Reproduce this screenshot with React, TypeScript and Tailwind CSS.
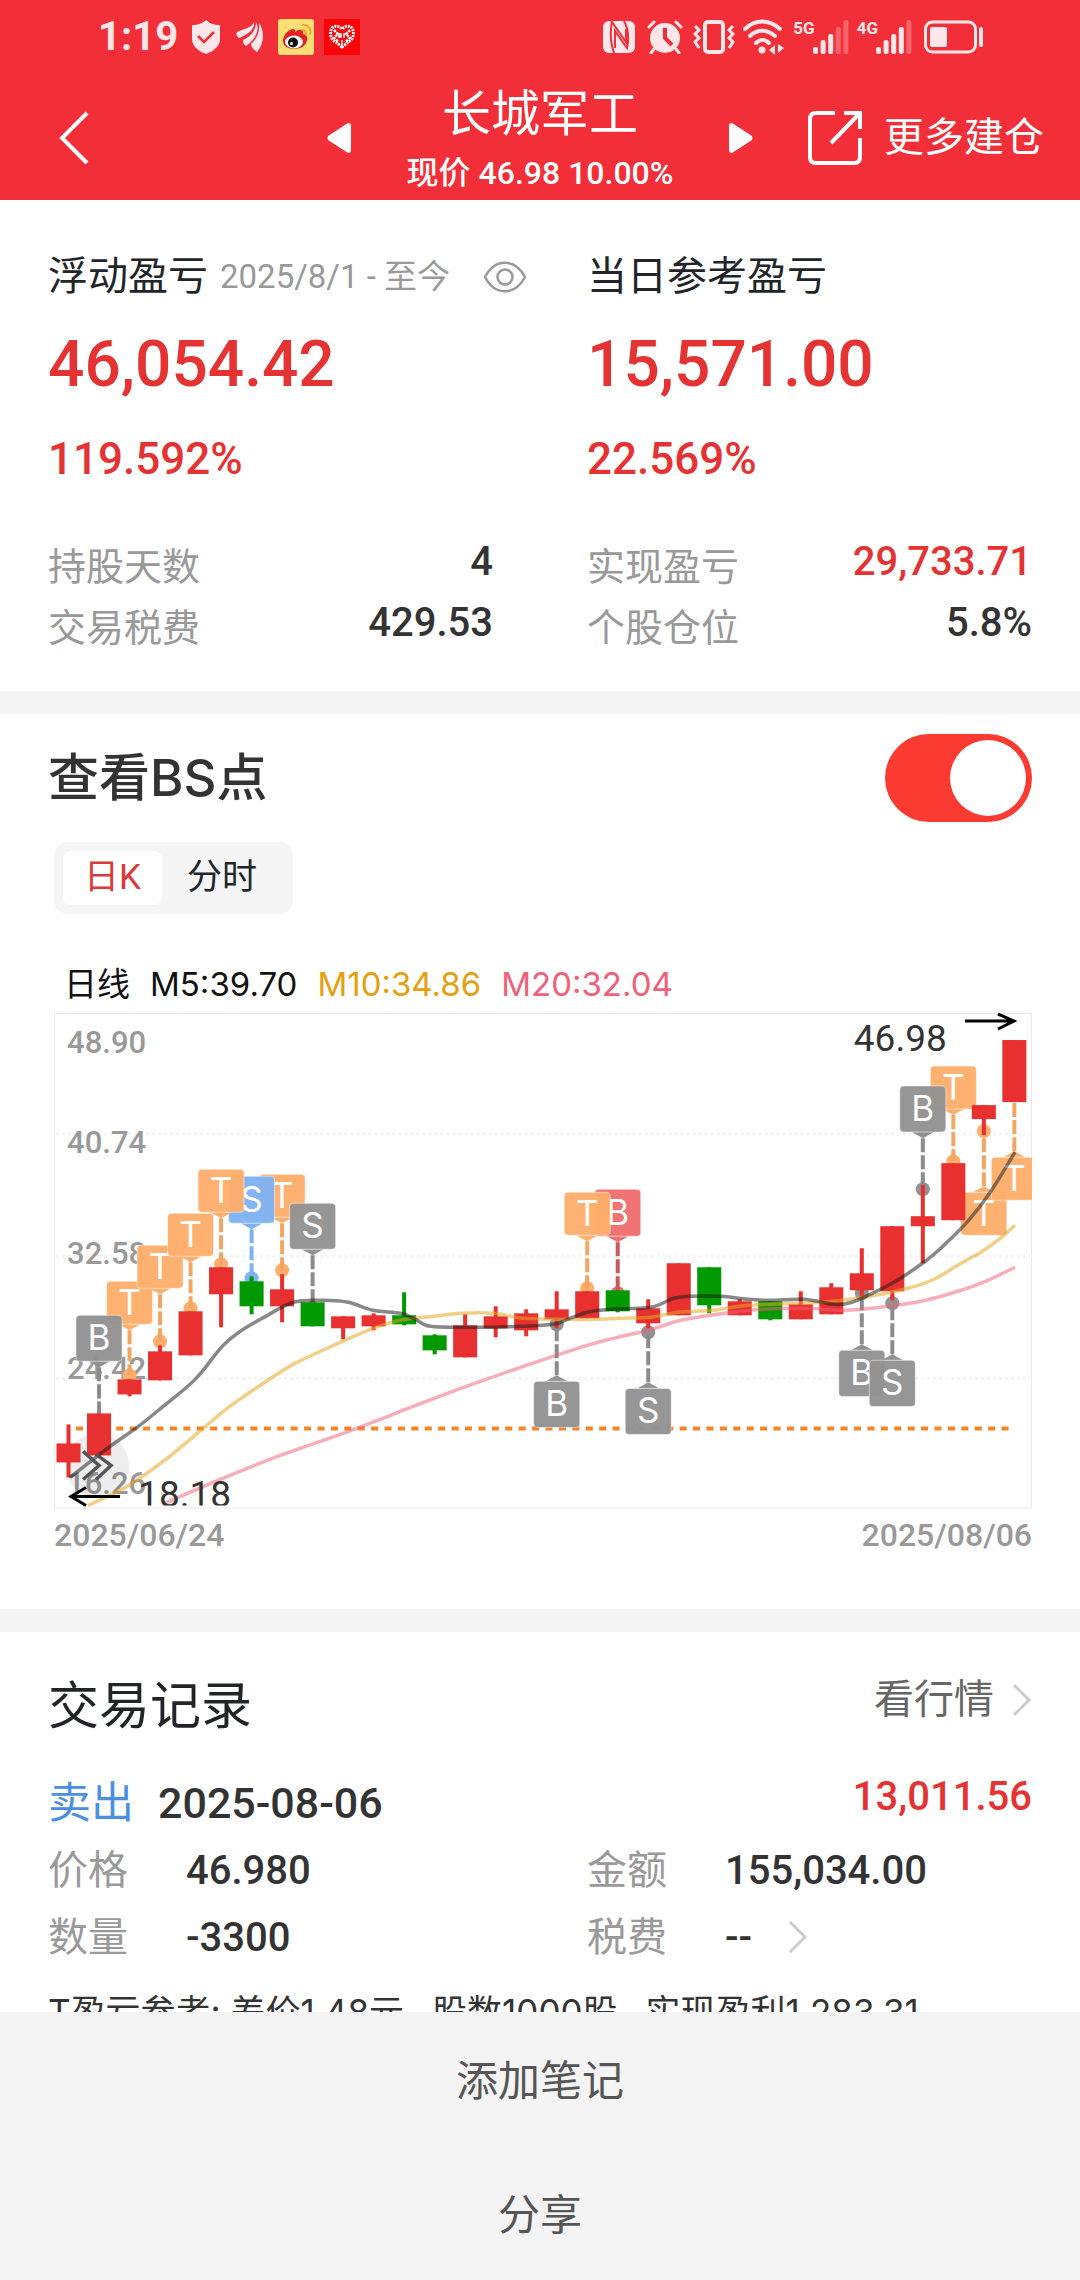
import { useState } from 'react';

type Candle = {
  open: number;
  close: number;
  high?: number;
  low?: number;
  down?: boolean;
};

type Marker = {
  index: number;
  letter: 'B' | 'S' | 'T';
  tone: 'gray' | 'orange' | 'blue' | 'red';
  top: number;
  height: number;
  dot: number;
};

type Point = [number, number];

// Vertical positions inside the 977x495 plot
const candles: Candle[] = [
  { open: 430, close: 449, high: 411, low: 464 },
  { open: 400, close: 442 },
  { open: 366, close: 381, low: 383 },
  { open: 338, close: 367, high: 332 },
  { open: 298, close: 342 },
  { open: 254, close: 281, low: 314 },
  { open: 268, close: 293, high: 263, low: 301, down: true },
  { open: 276, close: 293, high: 261, low: 309 },
  { open: 289, close: 313, down: true },
  { open: 303, close: 315, low: 326 },
  { open: 302, close: 313, high: 300, low: 317 },
  { open: 302, close: 311, high: 279, low: 312, down: true },
  { open: 322, close: 337, high: 321, low: 341, down: true },
  { open: 312, close: 344, high: 301 },
  { open: 303, close: 315, high: 293, low: 324 },
  { open: 300, close: 317, high: 296, low: 323 },
  { open: 296, close: 306, high: 278, low: 315 },
  { open: 278, close: 305 },
  { open: 277, close: 298, low: 299, down: true },
  { open: 295, close: 310, high: 286, low: 315 },
  { open: 250, close: 302 },
  { open: 254, close: 292, low: 300, down: true },
  { open: 288, close: 302, high: 286 },
  { open: 288, close: 306, low: 307, down: true },
  { open: 291, close: 306, high: 278 },
  { open: 274, close: 301, high: 270 },
  { open: 260, close: 277, high: 235, low: 285 },
  { open: 213, close: 278, low: 287 },
  { open: 203, close: 213, high: 172, low: 250 },
  { open: 150, close: 207 },
  { open: 92, close: 106, low: 122 },
  { open: 27, close: 89 },
];

const markers: Marker[] = [
  { index: 2, letter: 'T', tone: 'orange', top: 268, height: 43, dot: 362 },
  { index: 3, letter: 'T', tone: 'orange', top: 232, height: 43, dot: 328 },
  { index: 4, letter: 'T', tone: 'orange', top: 200, height: 43, dot: 295 },
  { index: 7, letter: 'T', tone: 'orange', top: 161, height: 43, dot: 257 },
  { index: 6, letter: 'S', tone: 'blue', top: 163, height: 47, dot: 265 },
  { index: 5, letter: 'T', tone: 'orange', top: 156, height: 43, dot: 251 },
  { index: 8, letter: 'S', tone: 'gray', top: 190, height: 46, dot: 295 },
  { index: 1, letter: 'B', tone: 'gray', top: 302, height: 46, dot: 408 },
  { index: 18, letter: 'B', tone: 'red', top: 176, height: 47, dot: 280 },
  { index: 17, letter: 'T', tone: 'orange', top: 179, height: 43, dot: 275 },
  { index: 16, letter: 'B', tone: 'gray', top: 368, height: 46, dot: 311 },
  { index: 19, letter: 'S', tone: 'gray', top: 375, height: 46, dot: 319 },
  { index: 26, letter: 'B', tone: 'gray', top: 337, height: 46, dot: 280 },
  { index: 27, letter: 'S', tone: 'gray', top: 347, height: 46, dot: 290 },
  { index: 29, letter: 'T', tone: 'orange', top: 53, height: 43, dot: 148 },
  { index: 28, letter: 'B', tone: 'gray', top: 73, height: 46, dot: 176 },
  { index: 30, letter: 'T', tone: 'orange', top: 179, height: 43, dot: 118 },
  { index: 31, letter: 'T', tone: 'orange', top: 144, height: 43, dot: 80 },
];

const tones = {
  gray: { box: '#929292', stem: '#8c8c8c' },
  orange: { box: '#ffae6c', stem: '#f3a563' },
  blue: { box: '#7eb2f3', stem: '#7eb2f3' },
  red: { box: '#f06d6e', stem: '#c85a5c' },
};

const ma5: Point[] = [
  [16, 464], [56, 433], [83, 414], [109, 393], [141, 366], [168, 333], [186, 318], [208, 305], [239, 289],
  [269, 287], [294, 289], [319, 297], [346, 300], [361, 306], [376, 313], [419, 314], [469, 313], [499, 311],
  [513, 306], [533, 299], [556, 296], [596, 294], [619, 285], [636, 283], [666, 283], [693, 286], [716, 287],
  [749, 286], [779, 291], [793, 290], [809, 284], [839, 269], [869, 249], [888, 233], [913, 208], [936, 178],
  [960, 139],
];

const ma10: Point[] = [
  [34, 492], [73, 473], [109, 448], [149, 415], [173, 395], [203, 374], [239, 351], [286, 329], [319, 315],
  [346, 307], [379, 303], [406, 300], [439, 300], [469, 305], [506, 306], [539, 306], [566, 305], [596, 304],
  [623, 299], [659, 297], [693, 292], [766, 289], [809, 284], [853, 275], [879, 266], [906, 250], [926, 239],
  [943, 227], [960, 212],
];

const ma20: Point[] = [
  [108, 491], [166, 466], [226, 442], [286, 421], [326, 406], [356, 394], [393, 380], [426, 368], [469, 353],
  [526, 334], [559, 325], [593, 317], [626, 307], [649, 303], [686, 298], [709, 296], [749, 295], [789, 297],
  [826, 294], [866, 288], [903, 278], [933, 267], [960, 254],
];

const priceLabels = [
  { text: '48.90', y: 40 },
  { text: '40.74', y: 140 },
  { text: '32.58', y: 251 },
  { text: '24.42', y: 366 },
  { text: '16.26', y: 481 },
];

const candleX = (index: number) => 14.5 + index * 30.48;

// Catmull-Rom spline through the points, as cubic beziers
function smoothPath(points: Point[]) {
  let d = `M${points[0][0]} ${points[0][1]}`;
  for (let i = 0; i < points.length - 1; i++) {
    const p0 = points[i - 1] ?? points[i];
    const p1 = points[i];
    const p2 = points[i + 1];
    const p3 = points[i + 2] ?? p2;
    d += ` C${p1[0] + (p2[0] - p0[0]) / 6} ${p1[1] + (p2[1] - p0[1]) / 6}`;
    d += ` ${p2[0] - (p3[0] - p1[0]) / 6} ${p2[1] - (p3[1] - p1[1]) / 6} ${p2[0]} ${p2[1]}`;
  }
  return d;
}

function ChartMarker({ index, letter, tone, top, height, dot }: Marker) {
  const x = candleX(index);
  const above = top < dot;
  const edge = above ? top + height : top;
  const tip = above ? edge + 6 : edge - 6;
  const color = tones[tone];
  return (
    <g>
      <circle cx={x} cy={dot} r={7} fill={color.box} />
      <path d={`M${x} ${tip}V${dot}`} stroke={color.stem} strokeWidth={4} strokeDasharray="14 3" />
      <path d={`M${x - 11} ${edge}H${x + 11}L${x} ${tip}Z`} fill={color.box} />
      <rect x={x - 23} y={top} width={46} height={height} rx={4} fill={color.box} fillOpacity={0.96} stroke="#fff" strokeOpacity={0.5} />
      <text x={x} y={top + height / 2 + 12} textAnchor="middle" fontSize={35} fill="#fff">
        {letter}
      </text>
    </g>
  );
}

function KLineChart() {
  return (
    <svg viewBox="0 0 977 495" className="block w-full font-[Inter,sans-serif]" role="img" aria-label="日K">
      <rect x={0.5} y={0.5} width={976} height={494} fill="#fff" stroke="#e9e9e9" />
      {[121, 243, 365].map((y) => (
        <path key={y} d={`M2 ${y}H975`} stroke="#f4f4f4" strokeWidth={3} strokeDasharray="3 3" />
      ))}
      <g fontSize={31} fontWeight={500} fill="#999" className="font-[Roboto,sans-serif]">
        {priceLabels.map((label) => (
          <text key={label.text} x={13} y={label.y}>
            {label.text}
          </text>
        ))}
      </g>
      <path d="M22 415H960" stroke="#f58426" strokeWidth={4} strokeDasharray="7 6.4" />
      <circle cx={43} cy={452} r={32} fill="#000" fillOpacity={0.07} />
      {markers.map((marker) => (
        <ChartMarker key={marker.index} {...marker} />
      ))}
      {candles.map((candle, i) => {
        const x = candleX(i);
        const color = candle.down ? '#009900' : '#e83030';
        return (
          <g key={i} fill={color}>
            <rect x={x - 2} y={candle.high ?? candle.open} width={4} height={(candle.low ?? candle.close) - (candle.high ?? candle.open)} />
            <rect x={x - 12} y={candle.open} width={24} height={candle.close - candle.open} />
          </g>
        );
      })}
      <g fill="none" strokeWidth={3.5}>
        <path d={smoothPath(ma20)} stroke="#f25c78" strokeOpacity={0.5} />
        <path d={smoothPath(ma10)} stroke="#e5a823" strokeOpacity={0.55} />
        <path d={smoothPath(ma5)} stroke="#1a1a1a" strokeOpacity={0.52} />
        <path d="M29 438L45 452L29 466M42 441L57 452L42 466" stroke="#555" />
      </g>
      {/* low and high price of the visible range */}
      <g fill="none" stroke="#000" strokeWidth={3}>
        <path d="M66 483H17M32 474L17 483L32 492" />
        <path d="M910 8H959M943 1L959 8L943 16" />
      </g>
      <svg x={0} y={0} width={977} height={492} fontSize={37} fill="#333" className="font-[Roboto,sans-serif]">
        <text x={84} y={494}>18.18</text>
        <text x={799} y={38}>46.98</text>
      </svg>
    </svg>
  );
}

function SignalBars({ strength }: { strength: number }) {
  return (
    <svg viewBox="0 0 36 34" className="h-[34px] w-9" fill="currentColor">
      {[7, 14, 20, 27, 34].map((h, i) => (
        <rect key={h} x={i * 7.6} y={34 - h} width={5} height={h} rx={2} opacity={i < strength ? 1 : 0.3} />
      ))}
    </svg>
  );
}

function StatusBar() {
  return (
    <div className="flex h-[72px] items-center pt-0.5 pr-24 pl-[98px] text-[#ffe6e8]">
      <span className="text-[40px] leading-none font-bold">1:19</span>
      <div className="ml-3.5 flex items-center gap-2.5">
        <svg viewBox="0 0 28 34" className="h-[34px] w-7">
          <path d="M14 0C17 3 22 5 28 5V19C28 26 22 31 14 34C6 31 0 26 0 19V5C6 5 11 3 14 0Z" fill="currentColor" />
          <path d="M6 16L12 22L22 12" fill="none" stroke="#f22f38" strokeWidth={2.5} />
        </svg>
        <svg viewBox="5 0 30 34" className="mx-1 h-[34px] w-[30px]" fill="currentColor">
          <path d="M8 12C14 9 23 8 25 2C26 9 20 14 10 18C7 16 7 14 8 12Z" />
          <path d="M14 20C21 17 27 11 27 2C31 10 27 19 17 26C14 24 14 22 14 20Z" />
          <path d="M22 24C28 19 31 12 30 3C36 11 35 24 28 32C25 30 22 27 22 24Z" />
        </svg>
        <svg viewBox="0 0 36 36" className="size-9">
          <rect width={36} height={36} rx={3} fill="#ffdf74" />
          <path d="M5 23C4 17 11 10 15 10C18 10 17 13 17 13C22 9 26 11 25 15C30 16 30 20 28 24C25 32 6 32 5 23Z" fill="#e6201c" />
          <ellipse cx={16} cy={23} rx={9} ry={6.5} fill="#fff" />
          <circle cx={15} cy={23.5} r={5} fill="#111" />
          <circle cx={13.5} cy={24.5} r={1.5} fill="#fff" />
          <path d="M23 11C26 10 29 13 28 16M24 6C30 5 34 10 32 16" fill="none" stroke="#efa92d" strokeWidth={2} />
        </svg>
        <svg viewBox="0 0 36 36" className="size-9">
          <rect width={36} height={36} fill="#fa0207" />
          <path d="M18 28L9 21C6 18 6 12 8 9C11 6 15 7 18 10C21 7 25 6 28 9C30 12 30 18 27 21Z" fill="none" stroke="#fff" strokeWidth={3} strokeDasharray="2 1" />
          <path d="M10 11L14 15L10 19L15 23M26 11L22 15L26 19L21 23" fill="none" stroke="#fff" strokeWidth={2.5} strokeDasharray="2.5 1" />
          <path d="M15 19V15H17V19M15 17H17M20 14V19M18 21V27" fill="none" stroke="#fff" strokeWidth={1.5} />
        </svg>
      </div>
      <div className="ml-auto flex items-center">
        <svg viewBox="0 0 32 32" className="size-8">
          <rect width={32} height={32} rx={6} fill="currentColor" />
          <path d="M9 0C7 11 7 21 11 32M9 1L23 21V8M12 27V10L24 27C26 18 26 9 21 0" fill="none" stroke="#f22f38" strokeWidth={2} />
        </svg>
        <svg viewBox="0 0 36 34" className="ml-3 h-[34px] w-9">
          <circle cx={18} cy={18} r={15} fill="currentColor" />
          <path d="M2 7L7 2M34 7L29 2M7 29L4 33M29 29L32 33" stroke="currentColor" strokeWidth={3} strokeLinecap="round" />
          <path d="M18 8V18L25 25" fill="none" stroke="#f22f38" strokeWidth={4} />
        </svg>
        <svg viewBox="0 0 42 34" className="ml-2.5 h-[34px] w-[42px]" fill="none" stroke="currentColor">
          <rect x={12} y={2} width={18} height={30} rx={3} strokeWidth={4} />
          <path d="M2 6L6 10L2 14L6 18L2 22L6 28M40 6L36 10L40 14L36 18L40 22L36 28" strokeWidth={3} />
        </svg>
        <svg viewBox="0 0 42 36" className="ml-2 h-9 w-[42px]" fill="none" stroke="currentColor" strokeWidth={4} strokeLinecap="round">
          <path d="M2 10C12 0 26 0 37 10M7 17C14 10 24 10 32 17M13 24C17 20 22 20 26 24" />
          <circle cx={19} cy={31} r={3.5} fill="currentColor" stroke="none" />
          <path d="M32 26V36L26 31ZM35 25L41 29L35 34Z" fill="currentColor" stroke="none" />
        </svg>
        <div className="ml-2 flex">
          <span className="-mr-0.5 text-[17px] leading-4 font-bold">5G</span>
          <SignalBars strength={3} />
        </div>
        <div className="ml-2 flex">
          <span className="-mr-0.5 text-[17px] leading-4 font-bold">4G</span>
          <SignalBars strength={4} />
        </div>
        <svg viewBox="0 0 60 34" className="ml-3 h-[34px] w-[60px]" fill="none" stroke="currentColor">
          <rect x={1.5} y={2} width={50} height={30} rx={7} strokeWidth={3} />
          <rect x={6} y={7} width={17} height={20} rx={2} fill="currentColor" stroke="none" />
          <path d="M57 9V25" strokeWidth={4} strokeLinecap="round" />
        </svg>
      </div>
    </div>
  );
}

function Header() {
  return (
    <header className="shrink-0 bg-[#f22f38] text-white">
      <StatusBar />
      <nav className="grid h-32 grid-cols-[1fr_auto_1fr] items-center px-9 pt-1">
        <button aria-label="返回" className="justify-self-start pl-[22px]">
          <svg viewBox="0 0 32 54" className="h-[54px] w-8" fill="none" stroke="currentColor" strokeWidth={4}>
            <path d="M29 2L4 27L29 52" />
          </svg>
        </button>
        <div className="flex items-center gap-14">
          <button aria-label="上一只">
            <svg viewBox="0 0 24 30" className="h-[30px] w-6" fill="currentColor">
              <path d="M21 0Q24 0 24 3V27Q24 30 21 30L1 17Q0 15 1 13Z" />
            </svg>
          </button>
          <div className="text-center whitespace-nowrap">
            <h1 className="text-[49px] leading-[70px]">长城军工</h1>
            <p className="text-[32px] leading-[46px] font-medium">现价 46.98 10.00%</p>
          </div>
          <button aria-label="下一只">
            <svg viewBox="0 0 24 30" className="h-[30px] w-6" fill="currentColor">
              <path d="M3 0Q0 0 0 3V27Q0 30 3 30L23 17Q24 15 23 13Z" />
            </svg>
          </button>
        </div>
        <button className="flex items-center gap-[22px] justify-self-end text-[40px] whitespace-nowrap">
          <svg viewBox="0 0 54 54" className="size-[54px]" fill="none" stroke="currentColor" strokeWidth={4}>
            <path d="M27 2H8Q2 2 2 8V46Q2 52 8 52H46Q52 52 52 46V27M36 2H52V18M51 3L23 32" />
          </svg>
          更多建仓
        </button>
      </nav>
    </header>
  );
}

function StatRow({ label, value, red }: { label: string; value: string; red?: boolean }) {
  return (
    <div className="flex items-start justify-between">
      <dt className="text-[38px] leading-[61px] text-[#999]">{label}</dt>
      <dd className={`text-[40px] leading-[50px] font-medium ${red ? 'text-[#e53333]' : 'text-[#333]'}`}>{value}</dd>
    </div>
  );
}

function Summary() {
  return (
    <section className="grid grid-cols-2 gap-x-[94px] px-12 pt-[47px] pb-8">
      <div>
        <div className="flex items-center leading-[60px] whitespace-nowrap">
          <h2 className="text-[40px] text-[#212529]">浮动盈亏</h2>
          <span className="ml-3 text-[33px] text-[#999]">2025/8/1 - 至今</span>
          <button aria-label="隐藏金额" className="ml-auto">
            <svg viewBox="0 0 44 32" className="-mr-[34px] h-8 w-11" fill="none" stroke="#999" strokeWidth={2.5}>
              <path d="M2 16C12 -3 32 -3 42 16C32 35 12 35 2 16Z" />
              <circle cx={22} cy={16} r={7.5} />
            </svg>
          </button>
        </div>
        <p className="mt-[18px] text-[64px] leading-[80px] font-medium text-[#e53333]">46,054.42</p>
        <p className="mt-6 text-[44px] leading-[60px] font-medium text-[#e53333]">119.592%</p>
      </div>
      <div>
        <h2 className="text-[40px] leading-[60px] text-[#212529]">当日参考盈亏</h2>
        <p className="mt-[18px] text-[64px] leading-[80px] font-medium text-[#e53333]">15,571.00</p>
        <p className="mt-6 text-[44px] leading-[60px] font-medium text-[#e53333]">22.569%</p>
      </div>
      <dl className="mt-12">
        <StatRow label="持股天数" value="4" />
        <StatRow label="交易税费" value="429.53" />
      </dl>
      <dl className="mt-12">
        <StatRow label="实现盈亏" value="29,733.71" red />
        <StatRow label="个股仓位" value="5.8%" />
      </dl>
    </section>
  );
}

function ChartSection() {
  const [showPoints, setShowPoints] = useState(true);
  const [tab, setTab] = useState('日K');

  return (
    <section className="border-t-[23px] border-[#f4f4f4] px-12 pt-5 pb-[50px]">
      <div className="flex items-center justify-between">
        <label htmlFor="bs-points" className="font-[Inter,'Noto_Sans_CJK_SC',sans-serif] text-[51px] leading-[60px] font-medium text-[#333]">
          查看BS点
        </label>
        <input
          id="bs-points"
          type="checkbox"
          checked={showPoints}
          onChange={(e) => setShowPoints(e.target.checked)}
          className="flex h-[88px] w-[147px] appearance-none items-center rounded-full bg-gray-300 px-1.5 before:size-[76px] before:rounded-full before:bg-white checked:justify-end checked:bg-[#fb3b32]"
        />
      </div>
      <div className="pl-1.5">
        <div className="mt-5 inline-flex h-[72px] items-center gap-1 rounded-[14px] bg-[#f5f5f5] pr-[15px] pl-[9px]">
          {['日K', '分时'].map((name) => (
            <button
              key={name}
              onClick={() => setTab(name)}
              className={`h-[54px] rounded-lg px-[21px] text-[35px] leading-[54px] ${tab === name ? 'bg-white text-[#d93a3a]' : 'text-[#212529]'}`}
            >
              {name}
            </button>
          ))}
        </div>
        <div className="mt-[46px] flex gap-5 pl-2.5 font-[Inter,'Noto_Sans_CJK_SC',sans-serif] text-[33px] leading-[48px] text-[#111]">
          <span>日线</span>
          <span>M5:39.70</span>
          <span className="text-[#e5a010]">M10:34.86</span>
          <span className="text-[#f0607a]">M20:32.04</span>
        </div>
        <div className="mt-[5px]">
          <KLineChart />
        </div>
        <div className="mt-0.5 flex justify-between text-[32px] leading-[48px] font-medium text-[#999]">
          <span>2025/06/24</span>
          <span>2025/08/06</span>
        </div>
      </div>
    </section>
  );
}

function ChevronRight() {
  return (
    <svg viewBox="0 0 20 34" className="h-[34px] w-5" fill="none" stroke="#ccc" strokeWidth={3}>
      <path d="M2 2L17 17L2 32" />
    </svg>
  );
}

function RecordField({ label, value, more }: { label: string; value: string; more?: boolean }) {
  return (
    <div className="flex items-center">
      <dt className="w-[138px] text-[40px] text-[#999]">{label}</dt>
      <dd className="flex items-center gap-9 text-[40px] font-medium text-[#333]">
        {value}
        {more && <ChevronRight />}
      </dd>
    </div>
  );
}

function TradeRecords() {
  return (
    <section className="border-t-[23px] border-[#f4f4f4] px-12 pt-10">
      <div className="flex items-start justify-between">
        <h2 className="text-[51px] leading-[70px] text-[#212529]">交易记录</h2>
        <a href="#" className="flex items-center gap-[18px] text-[40px] leading-[56px] text-[#666]">
          看行情
          <ChevronRight />
        </a>
      </div>
      <div className="mt-7 flex items-start leading-[67px]">
        <span className="text-[43px] text-[#4a90e2]">卖出</span>
        <time className="ml-6 text-[43px] font-medium text-[#333]">2025-08-06</time>
        <span className="ml-auto text-[40px] leading-[54px] font-medium text-[#e53333]">13,011.56</span>
      </div>
      <dl className="grid grid-cols-2 gap-x-[94px] leading-[67px]">
        <RecordField label="价格" value="46.980" />
        <RecordField label="金额" value="155,034.00" />
        <RecordField label="数量" value="-3300" />
        <RecordField label="税费" value="--" more />
      </dl>
      <p className="mt-4 flex gap-7 font-[Inter,'Noto_Sans_CJK_SC',sans-serif] text-[35px] leading-[50px] whitespace-nowrap text-[#333]">
        <span>T盈亏参考: 差价1.48元</span>
        <span>股数1000股</span>
        <span>实现盈利1,283.31</span>
      </p>
    </section>
  );
}

export default function App() {
  return (
    <div className="flex h-screen flex-col bg-white font-[Roboto,'Noto_Sans_CJK_SC',sans-serif]">
      <Header />
      <main className="min-h-0 flex-1 overflow-hidden">
        <Summary />
        <ChartSection />
        <TradeRecords />
      </main>
      <footer className="flex shrink-0 flex-col bg-[#f4f4f4] text-[42px] text-[#555]">
        <button className="h-[134px] pt-1">添加笔记</button>
        <button className="h-[134px] pt-1">分享</button>
      </footer>
    </div>
  );
}
